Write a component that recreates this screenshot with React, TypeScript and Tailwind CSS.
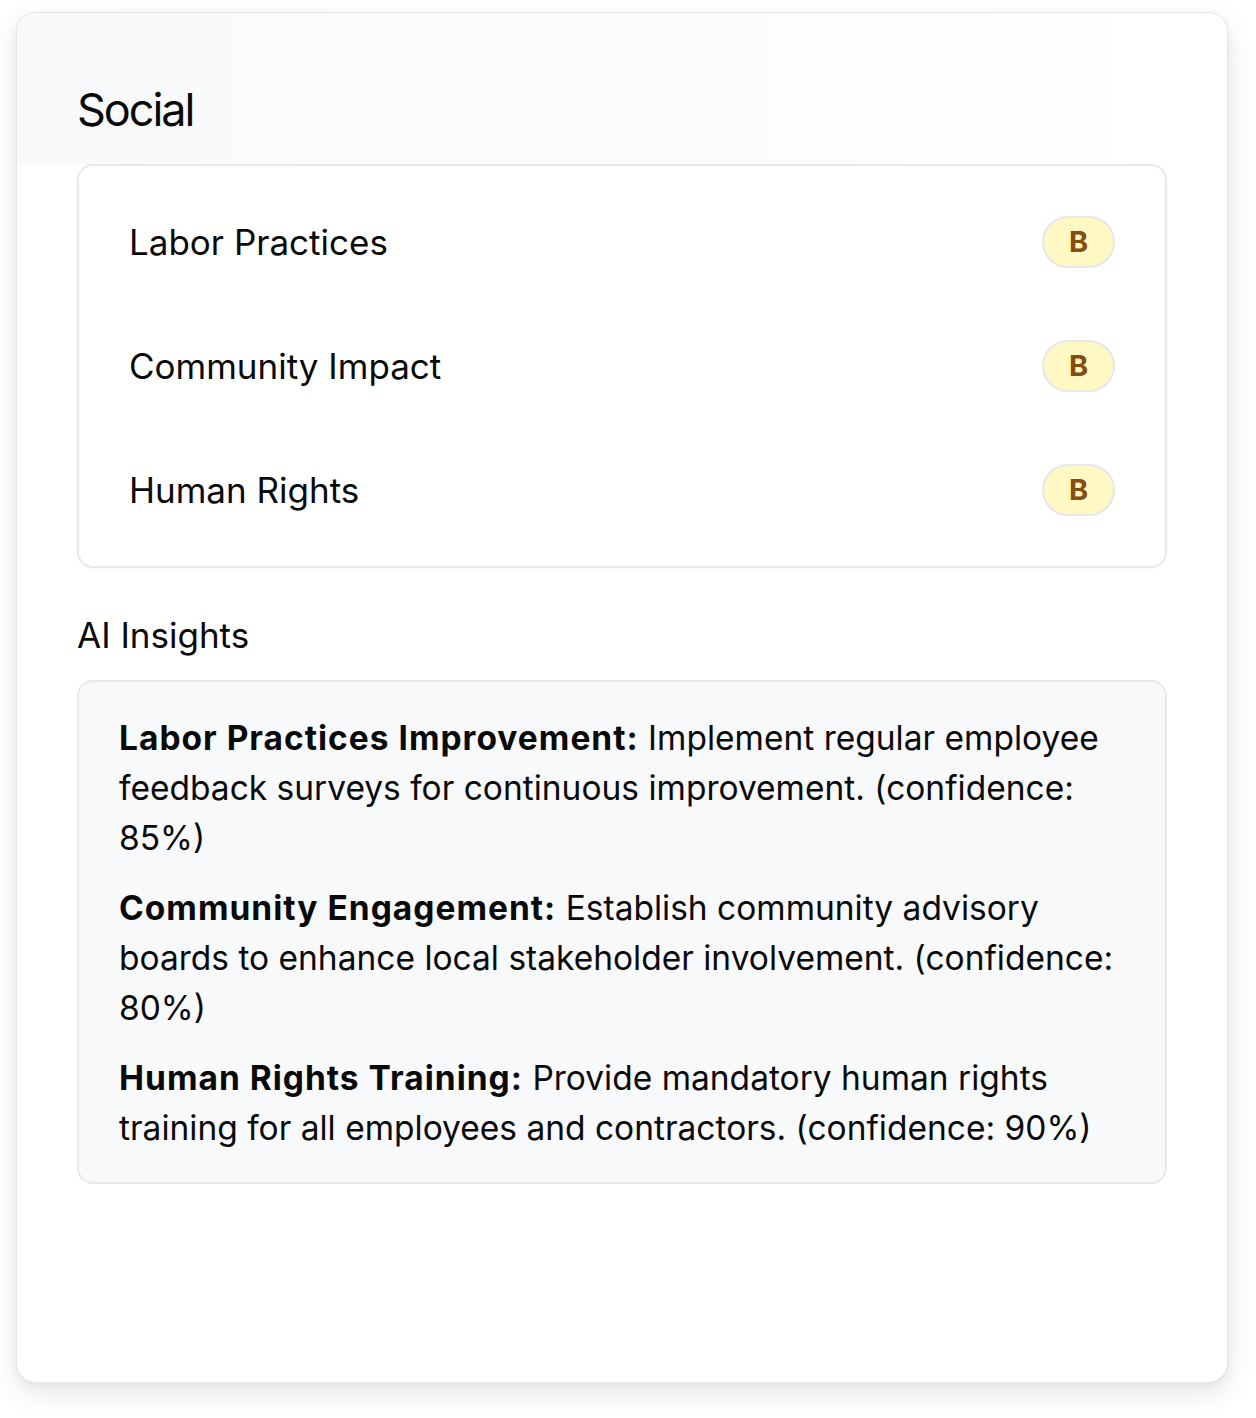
const ratings = [
  { name: 'Labor Practices', grade: 'B' },
  { name: 'Community Impact', grade: 'B' },
  { name: 'Human Rights', grade: 'B' },
];

const insights = [
  {
    title: 'Labor Practices Improvement:',
    text: 'Implement regular employee feedback surveys for continuous improvement. (confidence: 85%)',
  },
  {
    title: 'Community Engagement:',
    text: 'Establish community advisory boards to enhance local stakeholder involvement. (confidence: 80%)',
  },
  {
    title: 'Human Rights Training:',
    text: 'Provide mandatory human rights training for all employees and contractors. (confidence: 90%)',
  },
];

function GradeBadge({ grade }: { grade: string }) {
  return (
    <span className="inline-flex h-[52px] w-[73px] items-center justify-center rounded-full border-2 border-[#e5e7eb] bg-[#fef9c3] text-[29px] font-bold text-[#854d0e]">
      {grade}
    </span>
  );
}

export default function App() {
  return (
    <div className="min-h-[1418px] bg-white pt-[12px] pl-[16px]" style={{ fontFamily: 'Inter, "Noto Sans", sans-serif' }}>
      <div className="flex h-[1371px] w-[1212px] flex-col overflow-hidden rounded-[20px] border border-[#e6e6e6] bg-white shadow-[0_10px_28px_rgba(0,0,0,0.10),0_2px_6px_rgba(0,0,0,0.05)]">
        {/* Header */}
        <div className="h-[151px] bg-gradient-to-r from-[#f8f9fb] to-white px-[60px] pt-[68px]">
          <h2 className="text-[45px] leading-[58px] tracking-[-0.045em] text-[#0a0a0a]">Social</h2>
        </div>

        {/* Content */}
        <div className="flex flex-col px-[60px]">
          <div className="flex flex-col gap-[72px] rounded-[16px] border-2 border-[#e8e8e8] bg-white p-[50px] shadow-[0_1px_3px_rgba(0,0,0,0.04)]">
            {ratings.map((r) => (
              <div key={r.name} className="flex h-[52px] items-center justify-between">
                <span className="text-[35px] text-[#0a0a0a]">{r.name}</span>
                <GradeBadge grade={r.grade} />
              </div>
            ))}
          </div>

          <h3 className="mt-[42px] text-[35px] leading-[50px] text-[#0a0a0a]">AI Insights</h3>

          <div className="mt-[20px] flex flex-col gap-[20px] rounded-[16px] border-2 border-[#e8e8e8] bg-[#f8f9fb] pt-[31px] pb-[29px] pl-[40px] pr-[36px]">
            {insights.map((i) => (
              <p key={i.title} className="text-[33.5px] leading-[50px] text-[#0a0a0a]">
                <strong className="font-bold tracking-[0.03em]">{i.title}</strong> {i.text}
              </p>
            ))}
          </div>
        </div>
      </div>
    </div>
  );
}
